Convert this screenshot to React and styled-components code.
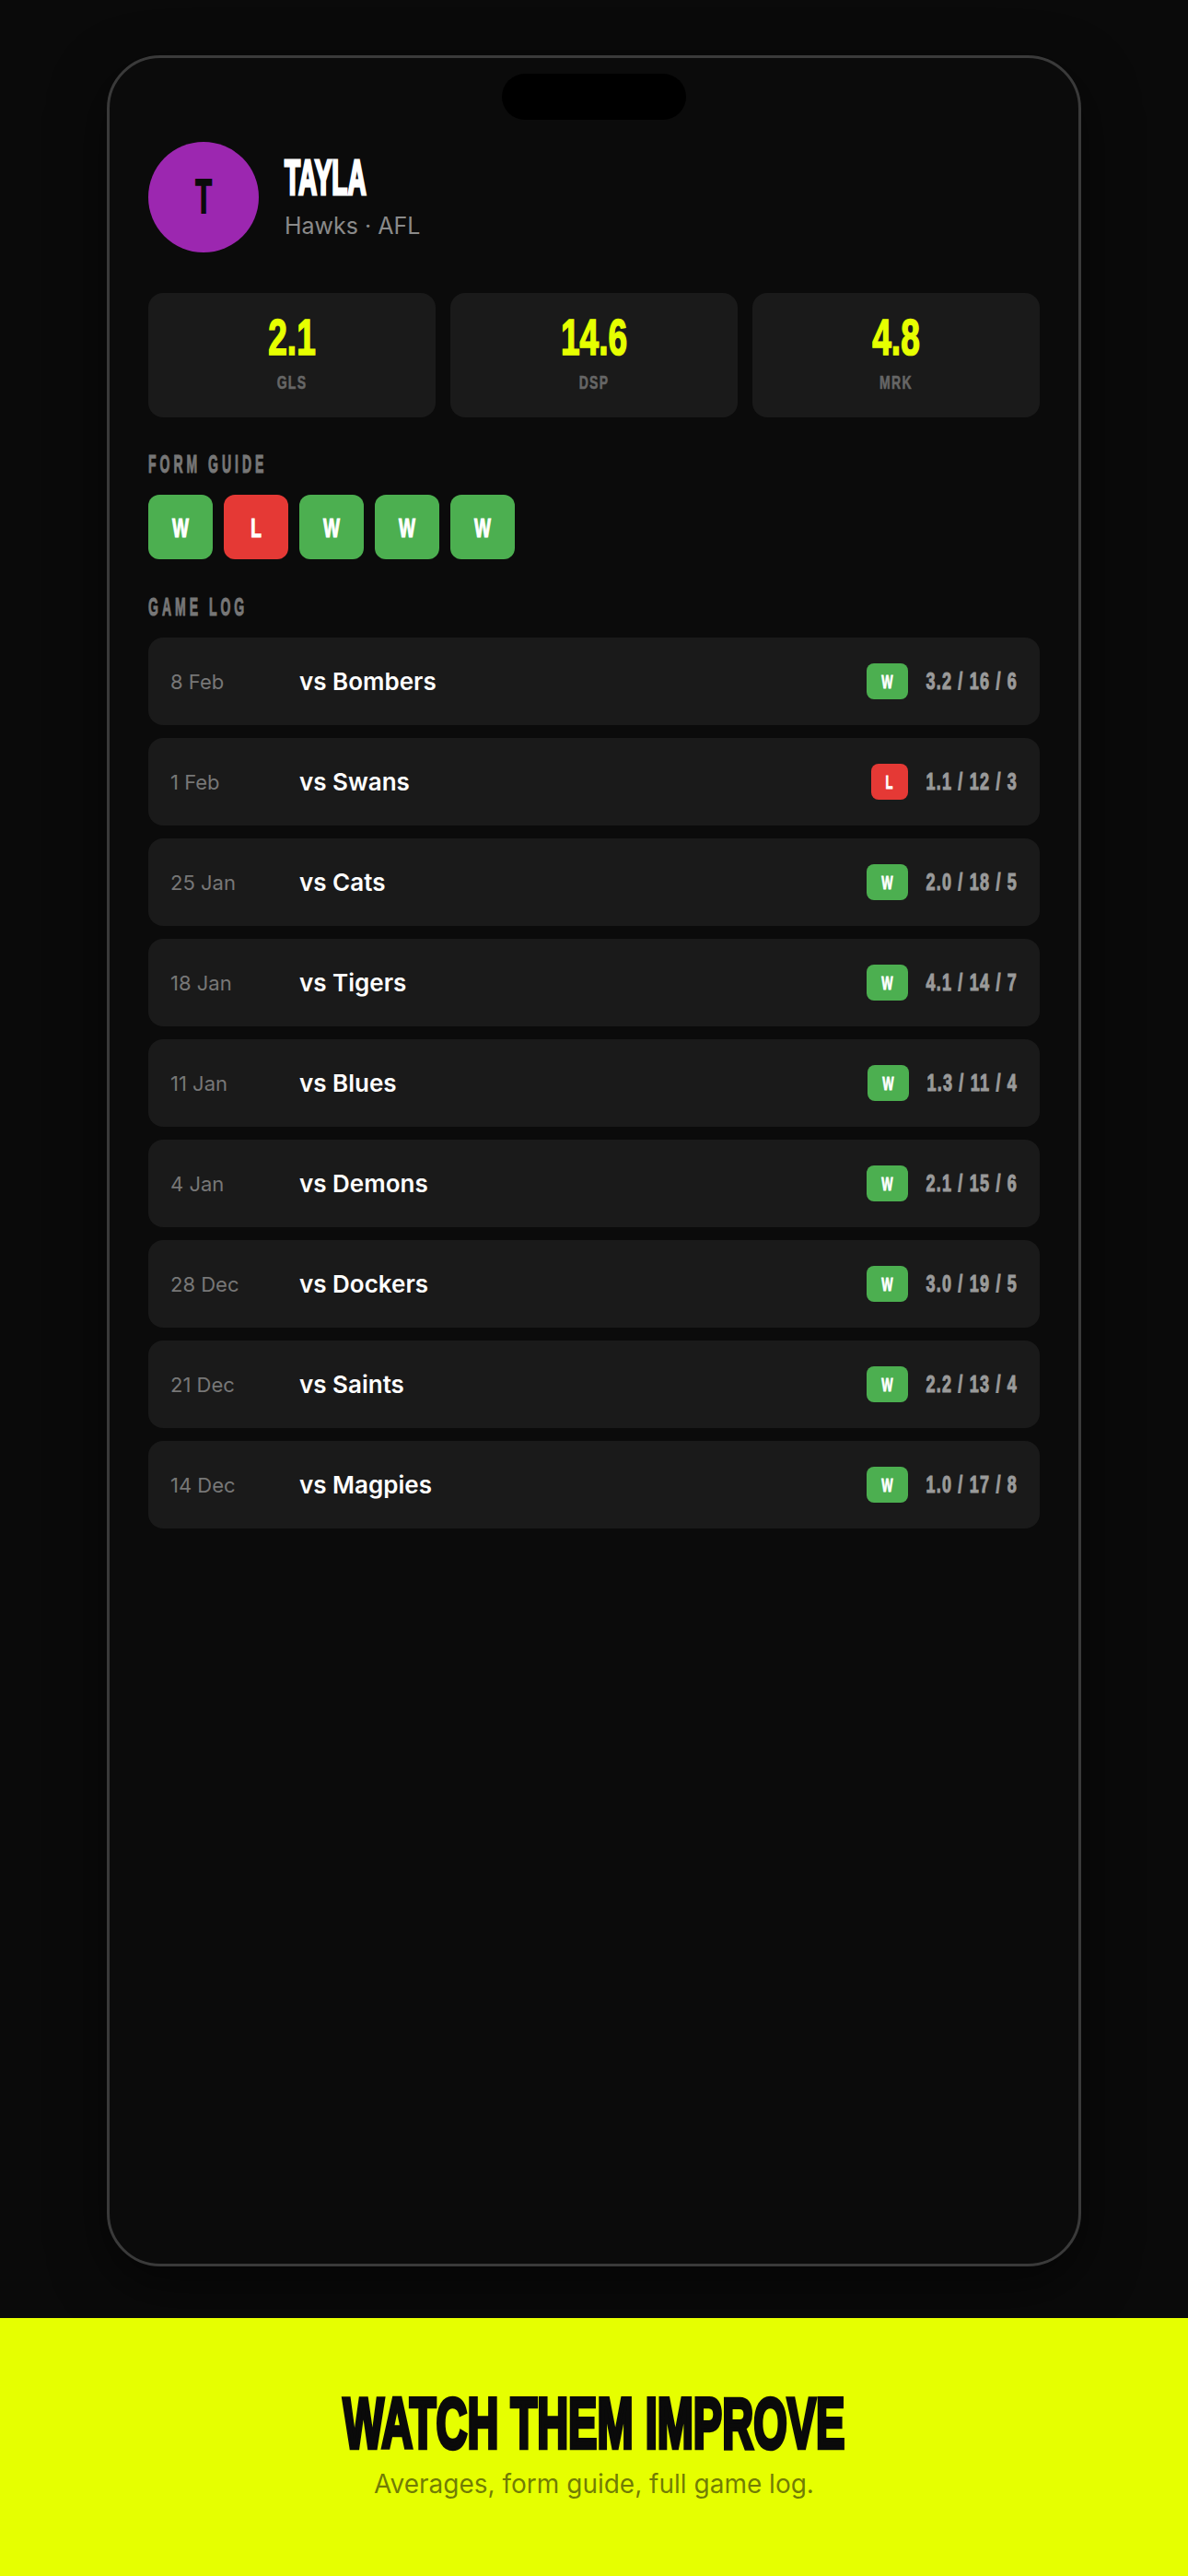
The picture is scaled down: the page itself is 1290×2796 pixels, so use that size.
import React from 'react';
import styled, { createGlobalStyle, css } from 'styled-components';

const GlobalStyle = createGlobalStyle`
  * { box-sizing: border-box; }
  body {
    margin: 0;
    background: #0a0a0a;
    font-family: Inter, "Noto Sans", sans-serif;
    -webkit-font-smoothing: antialiased;
  }
`;

// tall, narrow display lettering: a bold sans stretched vertically
const condensed = (sy, stroke = 0.05) => css`
  font-family: "Liberation Sans", Arial, sans-serif;
  font-weight: 700;
  text-transform: uppercase;
  line-height: 1;
  -webkit-text-stroke: ${stroke}em currentColor;
  transform: scaleY(${sy});
  transform-origin: 50% 50%;
`;

const Showcase = styled.section`
  display: flex;
  justify-content: center;
  padding: 60px 0 56px;
  background: #0a0a0a;
`;

const Phone = styled.div`
  width: 1058px;
  height: 2400px;
  border: 3px solid #3a3a3a;
  border-radius: 58px;
  background: #0b0b0b;
  box-shadow: 0 20px 60px rgba(0, 0, 0, 0.55);
  padding: 17px 42px 0;
  display: flex;
  flex-direction: column;
`;

const Island = styled.div`
  align-self: center;
  width: 200px;
  height: 50px;
  border-radius: 25px;
  background: #000;
`;

const Header = styled.header`
  display: flex;
  align-items: center;
  gap: 28px;
  margin-top: 24px;
`;

const Avatar = styled.div`
  width: 120px;
  height: 120px;
  flex-shrink: 0;
  border-radius: 50%;
  background: #9c27b0;
  color: #0a0a0a;
  display: flex;
  align-items: center;
  justify-content: center;
`;

const Glyph = styled.span`
  display: inline-block;
  font-size: ${(p) => p.$size}px;
  ${(p) => condensed(p.$sy, 0.04)};
`;

const Identity = styled.div`
  display: flex;
  flex-direction: column;
  gap: 22px;
  padding-top: 11px;
`;

const Name = styled.h1`
  margin: 0;
  color: #fff;
  font-size: 28px;
  ${condensed(1.9, 0.06)};
`;

const Team = styled.div`
  color: #8a8a8a;
  font-size: 25px;
  line-height: 1.2;
`;

const StatGrid = styled.div`
  display: grid;
  grid-template-columns: repeat(3, 1fr);
  gap: 16px;
  margin-top: 44px;
`;

const StatCard = styled.div`
  height: 135px;
  background: #1a1a1a;
  border-radius: 16px;
  display: flex;
  flex-direction: column;
  align-items: center;
  padding-top: 29px;
  gap: 24px;
`;

const StatValue = styled.div`
  color: #e6ff00;
  font-size: 37px;
  ${condensed(1.52, 0.03)};
`;

const StatLabel = styled.div`
  color: #666;
  font-size: 14px;
  letter-spacing: 1.3px;
  ${condensed(1.4, 0.03)};
`;

const SectionLabel = styled.h2`
  margin: ${(p) => p.$top}px 0 0;
  color: #777;
  font-size: 14px;
  letter-spacing: 4px;
  ${condensed(2, 0.04)};
`;

const FormRow = styled.div`
  display: flex;
  gap: 12px;
  margin-top: 27px;
`;

const FormChip = styled.div`
  width: 70px;
  height: 70px;
  border-radius: 12px;
  background: ${(p) => (p.$win ? '#4caf50' : '#e53935')};
  color: #fff;
  display: flex;
  align-items: center;
  justify-content: center;
`;

const LogList = styled.div`
  display: flex;
  flex-direction: column;
  gap: 14px;
  margin-top: 27px;
`;

const GameRow = styled.div`
  height: 95px;
  background: #1a1a1a;
  border-radius: 16px;
  padding: 0 24px;
  display: flex;
  align-items: center;
`;

const GameDate = styled.div`
  width: 140px;
  color: #777;
  font-size: 22px;
`;

const Opponent = styled.div`
  flex: 1;
  color: #fff;
  font-size: 26px;
  font-weight: 600;
`;

const Result = styled.div`
  height: 39px;
  padding: 0 16px;
  border-radius: 8px;
  background: ${(p) => (p.$win ? '#4caf50' : '#e53935')};
  color: #fff;
  display: flex;
  align-items: center;
`;

const Line = styled.div`
  margin-left: 20px;
  color: #9a9a9a;
  font-size: 18px;
  letter-spacing: 1.2px;
  ${condensed(1.4, 0.04)};
`;

const Banner = styled.section`
  position: relative;
  height: 280px;
  background: #e6ff00;
  display: flex;
  flex-direction: column;
  align-items: center;
  padding-top: 90px;
  gap: 27px;
`;

const BannerTitle = styled.h2`
  margin: 0;
  color: #0a0a0a;
  font-size: 47px;
  ${condensed(1.66, 0.06)};
`;

const BannerText = styled.p`
  margin: 0;
  color: rgba(10, 10, 10, 0.55);
  font-size: 28px;
  line-height: 1.2;
`;

const stats = [
  { value: '2.1', label: 'GLS' },
  { value: '14.6', label: 'DSP' },
  { value: '4.8', label: 'MRK' },
];

const form = ['W', 'L', 'W', 'W', 'W'];

const games = [
  { date: '8 Feb', team: 'Bombers', res: 'W', line: '3.2 / 16 / 6' },
  { date: '1 Feb', team: 'Swans', res: 'L', line: '1.1 / 12 / 3' },
  { date: '25 Jan', team: 'Cats', res: 'W', line: '2.0 / 18 / 5' },
  { date: '18 Jan', team: 'Tigers', res: 'W', line: '4.1 / 14 / 7' },
  { date: '11 Jan', team: 'Blues', res: 'W', line: '1.3 / 11 / 4' },
  { date: '4 Jan', team: 'Demons', res: 'W', line: '2.1 / 15 / 6' },
  { date: '28 Dec', team: 'Dockers', res: 'W', line: '3.0 / 19 / 5' },
  { date: '21 Dec', team: 'Saints', res: 'W', line: '2.2 / 13 / 4' },
  { date: '14 Dec', team: 'Magpies', res: 'W', line: '1.0 / 17 / 8' },
];

const App = () => {
  return (
    <>
      <GlobalStyle />
      <Showcase>
        <Phone>
          <Island />
          <Header>
            <Avatar>
              <Glyph $size={29} $sy={1.78}>T</Glyph>
            </Avatar>
            <Identity>
              <Name>Tayla</Name>
              <Team>Hawks · AFL</Team>
            </Identity>
          </Header>

          <StatGrid>
            {stats.map((s) => (
              <StatCard key={s.label}>
                <StatValue>{s.value}</StatValue>
                <StatLabel>{s.label}</StatLabel>
              </StatCard>
            ))}
          </StatGrid>

          <SectionLabel $top={43}>Form Guide</SectionLabel>
          <FormRow>
            {form.map((r, i) => (
              <FormChip key={i} $win={r === 'W'}>
                <Glyph $size={19} $sy={1.54}>{r}</Glyph>
              </FormChip>
            ))}
          </FormRow>

          <SectionLabel $top={44}>Game Log</SectionLabel>
          <LogList>
            {games.map((g) => (
              <GameRow key={g.date}>
                <GameDate>{g.date}</GameDate>
                <Opponent>vs {g.team}</Opponent>
                <Result $win={g.res === 'W'}>
                  <Glyph $size={13} $sy={1.6}>{g.res}</Glyph>
                </Result>
                <Line>{g.line}</Line>
              </GameRow>
            ))}
          </LogList>
        </Phone>
      </Showcase>
      <Banner>
        <BannerTitle>Watch Them Improve</BannerTitle>
        <BannerText>Averages, form guide, full game log.</BannerText>
      </Banner>
    </>
  );
};

export default App;
